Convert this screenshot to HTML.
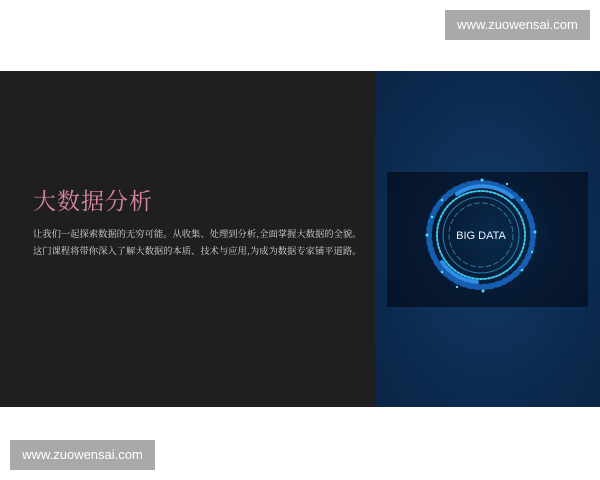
<!DOCTYPE html>
<html><head><meta charset="utf-8"><style>
body{margin:0;width:600px;height:480px;background:#fff;position:relative;overflow:hidden;font-family:"Liberation Sans",sans-serif}
.wm{position:absolute;width:145px;height:30px;background:#a9a9a9;color:#fff;font-size:13px;line-height:30px;text-align:center}
.band{position:absolute;left:0;top:71px;width:600px;height:336px;background:#1f1f20}
.right{position:absolute;left:375px;top:0;width:225px;height:336px;background:radial-gradient(ellipse at 50% 50%,#123a66 0%,#0d2c52 60%,#0a2445 100%)}
.img{position:absolute;left:12px;top:101px;width:201px;height:135px;background:radial-gradient(circle at 53% 47%,#0a2a4c 0%,#071a33 45%,#061327 100%)}
h1{position:absolute;left:33px;top:112px;margin:0;font-weight:normal;font-size:23px;color:#d9889f;font-family:"Noto Serif CJK SC","Liberation Serif",serif;letter-spacing:1px}
.p{position:absolute;left:33px;top:154px;font-size:9.3px;line-height:17px;color:#d8d8d8;font-family:"Noto Serif CJK SC","Liberation Serif",serif;white-space:nowrap}
</style></head><body>
<div class="wm" style="left:445px;top:10px">www.zuowensai.com</div>
<div class="band">
<h1>大数据分析</h1>
<div class="p">让我们一起探索数据的无穷可能。从收集、处理到分析,全面掌握大数据的全貌。<br>这门课程将带你深入了解大数据的本质、技术与应用,为成为数据专家铺平道路。</div>
<div class="right"><div class="img">
<svg width="201" height="135" viewBox="0 0 201 135">
<g fill="none" stroke-linecap="round">
<circle cx="94" cy="63" r="52" stroke="#1a6fd0" stroke-width="6" stroke-dasharray="3 4" opacity=".8"/>
<circle cx="94" cy="63" r="44" stroke="#39c6e8" stroke-width="2" stroke-dasharray="2 2"/>
<circle cx="94" cy="63" r="38" stroke="#2aa0d8" stroke-width="1" opacity=".8"/>
<circle cx="94" cy="63" r="32" stroke="#3fb8e0" stroke-width="1" stroke-dasharray="5 3" opacity=".6"/>
<path d="M70 22 A46 46 0 0 1 125 25" stroke="#2f8fe8" stroke-width="4"/>
<path d="M55 90 A46 46 0 0 0 90 110" stroke="#2f8fe8" stroke-width="4"/>
</g>
<g fill="#4fd8f0">
<circle cx="40" cy="63" r="1.5"/><circle cx="148" cy="60" r="1.5"/><circle cx="95" cy="8" r="1.5"/><circle cx="96" cy="119" r="1.5"/>
<circle cx="55" cy="28" r="1.3"/><circle cx="135" cy="28" r="1.3"/><circle cx="55" cy="100" r="1.3"/><circle cx="135" cy="98" r="1.3"/>
<circle cx="45" cy="45" r="1.2"/><circle cx="145" cy="80" r="1.2"/><circle cx="70" cy="115" r="1.2"/><circle cx="120" cy="12" r="1.2"/>
</g>
<text x="94" y="67" text-anchor="middle" fill="#e8f4ff" font-family="Liberation Sans Narrow,Liberation Sans,sans-serif" font-size="11">BIG DATA</text>
</svg></div></div>
</div>
<div class="wm" style="left:10px;top:440px">www.zuowensai.com</div>
</body></html>
